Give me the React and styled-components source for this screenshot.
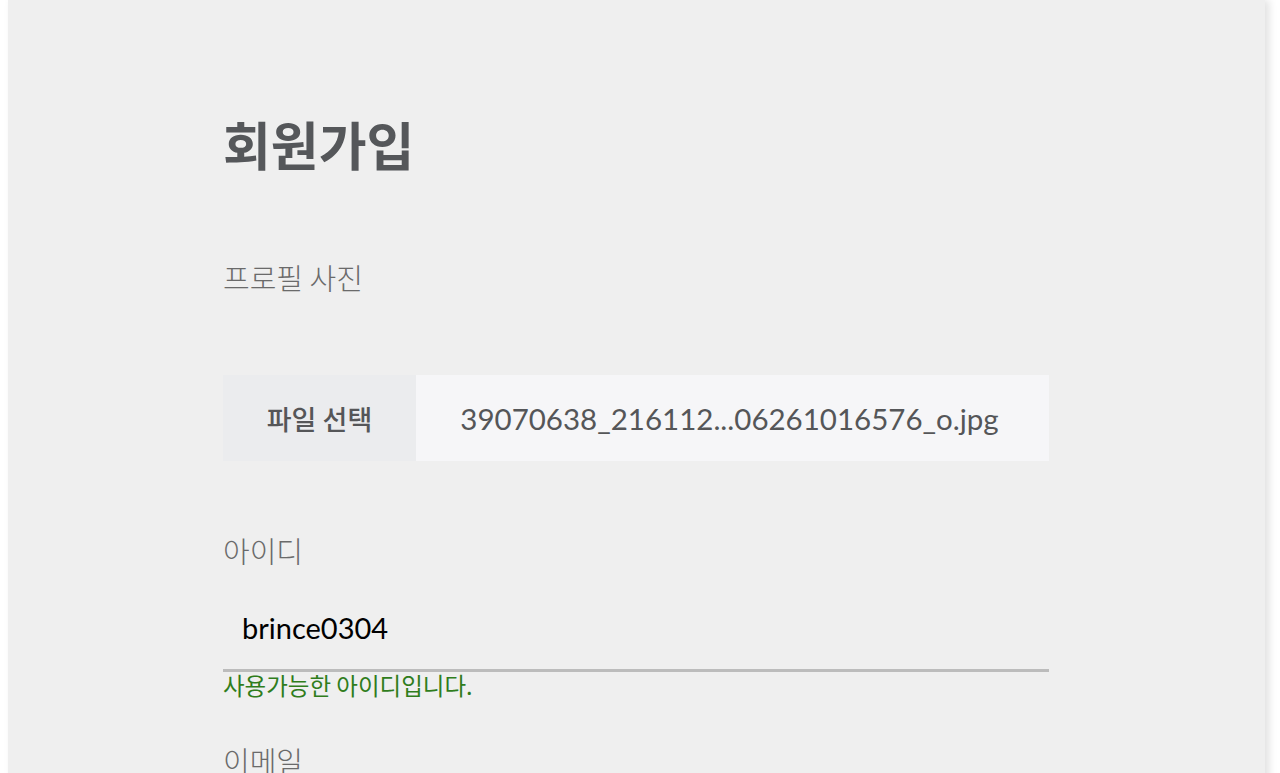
import styled, { createGlobalStyle } from "styled-components";

const GlobalStyle = createGlobalStyle`
  html, body {
    margin: 0;
    padding: 0;
    background: #ffffff;
  }
  body {
    font-family: "Noto Sans CJK KR", "Noto Sans", sans-serif;
    overflow: hidden;
  }
`;

const Page = styled.div`
  padding-left: 8px;
  padding-right: 15px;
  min-height: 773px;
  display: flex;
`;

const Panel = styled.main`
  flex: 1;
  min-height: 773px;
  background-color: #efefef;
  box-shadow: 4px 0 8px rgba(0, 0, 0, 0.12);
  padding: 114px 0 0 215px;
`;

const Form = styled.form`
  width: 826px;
  display: flex;
  flex-direction: column;
`;

const Title = styled.h1`
  margin: 0;
  font-size: 52px;
  line-height: 60px;
  font-weight: 700;
  color: #55575a;
`;

const Label = styled.label`
  display: block;
  margin-top: ${(p) => p.$gap}px;
  font-size: 29px;
  line-height: 36px;
  font-weight: 300;
  color: #6a6a6a;
`;

const FileRow = styled.div`
  margin-top: 80px;
  height: 86px;
  display: flex;
`;

const FileButton = styled.div`
  width: 193px;
  display: flex;
  align-items: center;
  justify-content: center;
  background-color: #ebecee;
  color: #555658;
  font-size: 27px;
  font-weight: 500;
`;

const FileName = styled.div`
  flex: 1;
  display: flex;
  align-items: center;
  justify-content: center;
  padding-right: 6px;
  background-color: #f6f6f8;
  color: #555658;
  font-family: "Lato", "Open Sans", sans-serif;
  font-size: 29.5px;
`;

const TextInput = styled.input`
  box-sizing: border-box;
  margin-top: 18px;
  width: 100%;
  height: 86px;
  padding: 0 0 0 19px;
  border: none;
  border-bottom: 3px solid #bcbcbc;
  background: transparent;
  font-family: "Lato", "Open Sans", sans-serif;
  font-size: 29px;
  color: #000;
  outline: none;
`;

const Message = styled.p`
  margin: 0;
  font-size: 23.5px;
  line-height: 26px;
  font-weight: 400;
  color: #2f7d1c;
`;

const App = () => {
  return (
    <>
      <GlobalStyle />
      <Page>
        <Panel>
          <Form onSubmit={(e) => e.preventDefault()}>
            <Title>회원가입</Title>
            <Label $gap={85}>프로필 사진</Label>
            <FileRow>
              <FileButton>파일 선택</FileButton>
              <FileName>39070638_216112...06261016576_o.jpg</FileName>
            </FileRow>
            <Label $gap={71}>아이디</Label>
            <TextInput type="text" defaultValue="brince0304" />
            <Message>사용가능한 아이디입니다.</Message>
            <Label $gap={44}>이메일</Label>
          </Form>
        </Panel>
      </Page>
    </>
  );
};

export default App;
